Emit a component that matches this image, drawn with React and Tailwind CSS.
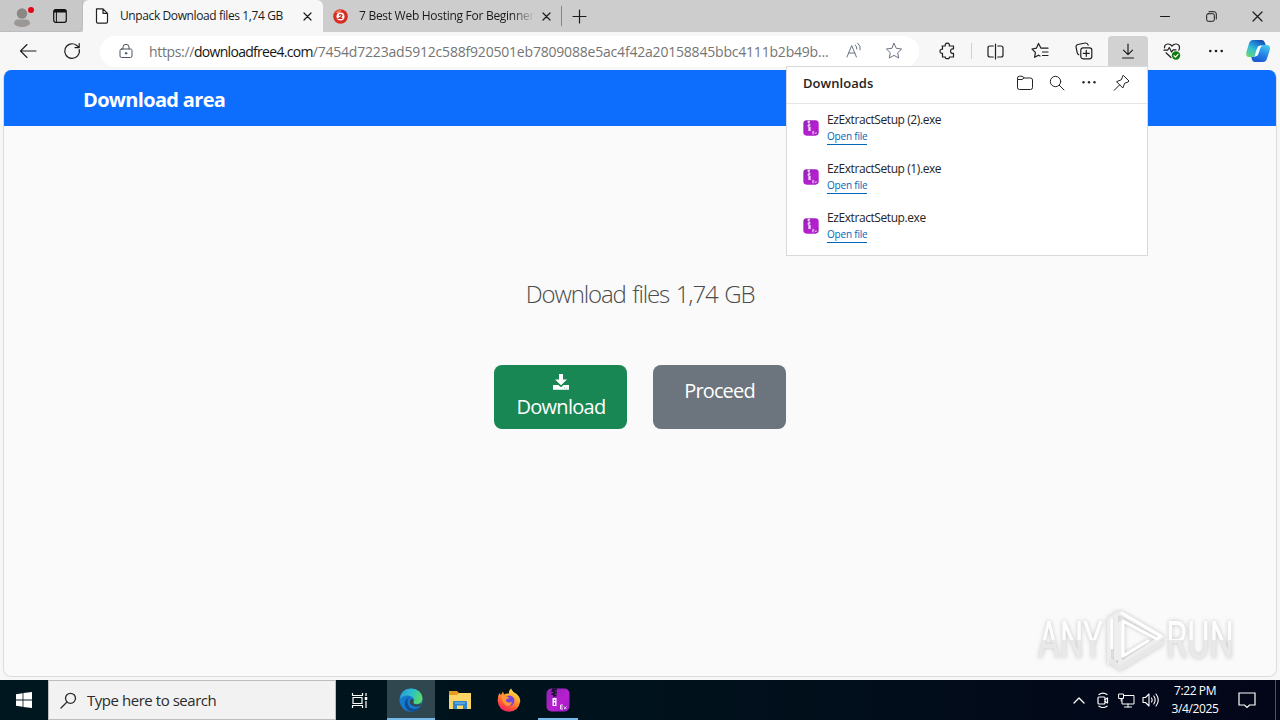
import React from 'react';

const Svg = ({ size = 16, sw = 1, className = '', children, ...rest }) => (
    <svg
        width={size}
        height={size}
        viewBox={`0 0 ${size} ${size}`}
        fill="none"
        stroke="currentColor"
        strokeWidth={sw}
        strokeLinecap="round"
        strokeLinejoin="round"
        className={`shrink-0 ${className}`}
        {...rest}
    >
        {children}
    </svg>
);

const CloseIcon = ({ size = 10 }) => (
    <Svg size={size} sw={1.2}>
        <path d={`M1 1 L${size - 1} ${size - 1} M${size - 1} 1 L1 ${size - 1}`} />
    </Svg>
);

const StarIcon = () => (
    <Svg size={18} className="text-gray-500">
        <path d="M9 1.4 L11.3 6.3 L16.6 7 L12.7 10.7 L13.7 16 L9 13.4 L4.3 16 L5.3 10.7 L1.4 7 L6.7 6.3 Z" />
    </Svg>
);

const ToolButton = ({ children, active }) => (
    <div className="flex w-11 shrink-0 justify-center">
        <div className={`flex h-[30px] w-10 items-center justify-center rounded-t ${active ? 'bg-[#d2d2d2]' : ''}`}>{children}</div>
    </div>
);

const TabStrip = () => (
    <div className="flex h-8 bg-[#cdcdcd] text-[12px] text-[#1b1b1b]">
        <div className="flex w-[83px] items-center rounded-br-md border-b border-r border-[#bdbdbd] bg-[#c8c8c8] pl-3">
            <svg width="24" height="28" viewBox="0 0 24 28" className="shrink-0">
                <circle cx="10" cy="11.5" r="5.2" fill="#8b8785" />
                <path d="M2 22 Q2 17.5 6 17.5 H14 Q18 17.5 18 22 Q15 25 10 25 Q5 25 2 22Z" fill="#9b9795" />
                <circle cx="19" cy="8" r="3" fill="#e30613" />
            </svg>
            <svg width="14" height="14" viewBox="0 0 14 14" className="ml-[17px] shrink-0" fill="none" stroke="#111">
                <rect x="0.7" y="0.7" width="12.6" height="12.6" rx="2" strokeWidth="1.2" />
                <path d="M1 2.2 H13" strokeWidth="2.6" />
                <path d="M3.4 3 V13" strokeWidth="1" />
            </svg>
        </div>
        <div className="flex w-[240px] items-center rounded-t-md bg-[#f7f7f7]">
            <svg width="14" height="16" viewBox="0 0 14 16" className="ml-3 shrink-0" fill="#fff" stroke="#222" strokeWidth="1.2" strokeLinejoin="round">
                <path d="M1.5 0.8 H8 L12.5 5.3 V13.8 Q12.5 15.2 11.2 15.2 H2.8 Q1.5 15.2 1.5 13.8 Z M8 0.8 V5.3 H12.5" />
            </svg>
            <div className="ml-[11px] w-[183px] whitespace-nowrap tracking-[-0.39px]">Unpack Download files 1,74 GB</div>
            <CloseIcon size={9} />
        </div>
        <div className="flex w-[238px] items-center pl-[10px]">
            <svg width="15" height="15" viewBox="0 0 15 15" className="shrink-0">
                <circle cx="7.5" cy="7.5" r="7.3" fill="#d92b1f" />
                <path d="M2 4 Q5 0.5 9 1.2 L6 4Z" fill="#f47a5c" />
                <circle cx="7.5" cy="7.5" r="4" fill="#fff" />
                <path d="M6 6.5 Q7.5 4.8 9 6.4 Q9 7.4 6 9.4 H9.4" fill="none" stroke="#c4281d" strokeWidth="1.3" />
            </svg>
            <div className="ml-[11px] w-[174px] whitespace-nowrap tracking-[-0.28px] [mask-image:linear-gradient(to_right,black_88%,transparent_101%)]">
                7 Best Web Hosting For Beginner
            </div>
            <div className="ml-[9px]"><CloseIcon size={9} /></div>
        </div>
        <div className="my-[6px] w-px bg-[#858585]" />
        <div className="flex flex-1 items-center pl-[10px]">
            <Svg size={15} sw={1.2}><path d="M7.5 1 V14 M1 7.5 H14" /></Svg>
        </div>
        <div className="flex w-[138px] items-center">
            <div className="flex w-[46px] justify-center"><Svg size={10}><path d="M0.5 5.5 H9.5" /></Svg></div>
            <div className="flex w-[46px] justify-center">
                <Svg size={11}>
                    <rect x="0.7" y="2.7" width="7.6" height="7.6" rx="1.5" />
                    <path d="M3 0.7 H8 Q10.3 0.7 10.3 3 V8" />
                </Svg>
            </div>
            <div className="flex w-[46px] justify-center"><CloseIcon size={11} /></div>
        </div>
    </div>
);

const Toolbar = () => (
    <div className="flex h-[38px] items-center bg-[#f7f7f7] pl-[6px] text-[#1f1f1f]">
        <ToolButton>
            <Svg size={18} sw={1.1}><path d="M17 9 H1.5 M8 2.5 L1.5 9 L8 15.5" /></Svg>
        </ToolButton>
        <ToolButton>
            <Svg size={18} sw={1.2}><path d="M16.2 7.5 A7.3 7.3 0 1 1 13.4 3.2 L16 5.4 M16.2 1.5 V5.6 H12" /></Svg>
        </ToolButton>
        <div className="ml-[6px] mr-[6px] flex h-[31px] w-[819px] shrink-0 items-center rounded-full bg-white">
            <Svg size={14} className="ml-[19px] h-4 text-gray-600">
                <rect x="1" y="5" width="12" height="8.5" rx="1.5" />
                <path d="M4 5 V3 A3 2.6 0 0 1 10 3 V5" />
                <circle cx="7" cy="9.3" r="0.8" fill="currentColor" />
            </Svg>
            <div className="ml-4 w-[696px] whitespace-nowrap text-[14px] tracking-[-0.2px] text-[#757575]">
                <span className="tracking-[-0.35px]">https://</span>
                <span className="tracking-[-0.7px] text-[#151515]">downloadfree4.com</span>/7454d7223ad5912c588f920501eb7809088e5ac4f42a20158845bbc4111b2b49b...
            </div>
            <Svg size={18} className="text-gray-500">
                <path d="M2 15 L6.7 3.5 L11.4 15 M3.7 11 H9.8 M10.3 3 Q12 4.5 11.8 7 M12.8 1.2 Q15.8 3.8 15.2 7.8" />
            </Svg>
            <div className="ml-[22px]"><StarIcon /></div>
        </div>
        <ToolButton>
            <Svg size={18} sw={1.2} className="ml-[2px]">
                <path d="M3 4 H6.3 Q5.8 1.2 8.3 1.2 Q10.8 1.2 10.3 4 H14.5 V7 Q11.6 6.6 11.6 9.2 Q11.6 11.8 14.5 11.4 V15 H10.4 Q10.8 16.7 8.4 16.7 Q6 16.7 6.3 15 H3.5 V11.3 Q1 11.5 1 9.2 Q1 7 3.5 7.2 V4" />
            </Svg>
        </ToolButton>
        <div className="mx-[2px] h-4 w-px shrink-0 bg-[#cfcfcf]" />
        <ToolButton>
            <Svg size={17} sw={1.2} className="mr-[1px]">
                <path d="M6.3 3 H3 Q1 3 1 5 V12 Q1 14 3 14 H6.3 M8.5 1 V16 M10.7 3 H14 Q16 3 16 5 V12 Q16 14 14 14 H10.7" />
            </Svg>
        </ToolButton>
        <ToolButton>
            <Svg size={18} sw={1.2}>
                <path d="M10 6.2 H17 M11.5 10 H17 M11.5 13.5 H17 M10 6.2 L7.5 1.5 L5.4 6.2 L1 7 L4.4 10.4 L3.6 15.3 L7.5 13.2 L9 14" />
            </Svg>
        </ToolButton>
        <ToolButton>
            <Svg size={18} sw={1.2}>
                <rect x="5.8" y="5.8" width="11" height="11" rx="2.2" />
                <path d="M11.3 8.3 V14.3 M8.3 11.3 H14.3 M3.8 12.8 Q2.4 12 2.1 10.4 L1.1 5.2 Q0.8 3 2.8 2.5 L10.5 1 Q12.6 0.9 13.2 3.2" />
            </Svg>
        </ToolButton>
        <ToolButton active>
            <Svg size={16} sw={1.2}><path d="M8 1 V11.5 M3.5 7.2 L8 11.7 L12.5 7.2 M2.5 15 H13.5" /></Svg>
        </ToolButton>
        <ToolButton>
            <Svg size={18} sw={1.2}>
                <path d="M1.5 5.8 Q1.5 2.3 4.7 2 Q7.2 1.8 9 4 Q10.8 1.8 13.3 2 Q16.5 2.3 16.5 5.8 Q16.5 7 15.8 8.3 M1 8.2 H4.6 L6.3 5.5 L8.6 10 L10.2 7.8 H13 M3 10.8 L8 15.5" />
                <circle cx="13" cy="13.5" r="4.2" fill="#107c10" stroke="none" />
                <path d="M11 13.7 L12.5 15.1 L15 12.3" stroke="#fff" />
            </Svg>
        </ToolButton>
        <ToolButton>
            <Svg size={16}>
                <g fill="currentColor" stroke="none"><circle cx="2.3" cy="8" r="1.3" /><circle cx="8" cy="8" r="1.3" /><circle cx="13.7" cy="8" r="1.3" /></g>
            </Svg>
        </ToolButton>
        <svg width="26" height="24" viewBox="0 0 26 24" className="ml-[7px] shrink-0">
            <defs>
                <linearGradient id="cpA" x1="0.8" y1="0" x2="0.2" y2="1">
                    <stop offset="0" stopColor="#1846b0" />
                    <stop offset="0.35" stopColor="#1f8fd8" />
                    <stop offset="0.6" stopColor="#35bfd0" />
                    <stop offset="1" stopColor="#62d67c" />
                </linearGradient>
                <linearGradient id="cpB" x1="0.7" y1="0" x2="0.3" y2="1">
                    <stop offset="0" stopColor="#46c4ee" />
                    <stop offset="0.5" stopColor="#2585e8" />
                    <stop offset="1" stopColor="#1b55cf" />
                </linearGradient>
            </defs>
            <path d="M8 1 H17 Q19 1 20 4 L20.6 6 H17 Q14.5 6 13.5 9 L11.5 15 Q10.5 18 7.5 18 H4 Q0.5 18 1.4 13 L4 4.5 Q5 1 8 1Z" fill="url(#cpA)" />
            <path d="M18 23 H10 Q7.5 23 6.8 20 L6.2 18 H8 Q11 18 12 15 L14 9 Q15 6 18 6 H21.5 Q26 6 24.8 11 L22 19.5 Q21 23 18 23Z" fill="url(#cpB)" />
            <path d="M13.2 7 H17.2 Q15.8 7.4 15.2 9.4 L13.2 15.6 Q12.6 17.6 9.6 17.6 L11.2 11.5Z" fill="#f4faff" />
        </svg>
    </div>
);

const ZipIcon = ({ size }) => (
    <svg width={size} height={size} viewBox="0 0 24 24" className="shrink-0">
        <defs>
            <linearGradient id="zip" x1="0" y1="0" x2="1" y2="1">
                <stop offset="0" stopColor="#8d23b5" />
                <stop offset="0.6" stopColor="#b81fd0" />
                <stop offset="1" stopColor="#9a1bc0" />
            </linearGradient>
        </defs>
        <rect x="0.5" y="0.5" width="23" height="23" rx="5" fill="url(#zip)" />
        {size > 20 ? (
            <g>
                <path d="M6 0.5 H11 V2.5 H9 V3.5 H11 V5.5 H9 V6.5 H10.5 V8.5 H7 V7 H5.5 V5 H7.5 V4 H5.5 V2 H6Z" fill="#1d1030" />
                <path d="M6.5 10 H10.5 V18 H6.5Z" fill="#fff" />
                <path d="M8 11.8 H9.3 V13 H8Z M7.8 14.5 H9.2 V17 H7.8Z" fill="#9020b0" />
            </g>
        ) : (
            <path d="M7 1 H10.5 V3.5 H9.5 V5.5 H11 V8.5 H9.5 V10 H11.5 V16.5 H8 V10 H7 V7 H8.2 V4.5 H7Z" fill="#ecd5f5" />
        )}
        <path d="M14.5 17 H17 M14.5 19 H16.7 M14.5 21 H17 M14.5 17 V21 M18 18.5 L20.5 21 M20.5 18.5 L18 21" stroke="#f3dff8" strokeWidth="1" fill="none" />
    </svg>
);

const downloads = ['EzExtractSetup (2).exe', 'EzExtractSetup (1).exe', 'EzExtractSetup.exe'];

const DownloadsPanel = () => (
    <div className="absolute left-[786px] top-[66px] h-[190px] w-[362px] border border-[#d9d9d9] bg-white text-[#242424]">
        <div className="flex h-[37px] items-center border-b border-[#e6e6e6] pb-[3px] pl-4">
            <div className="flex-1 text-[13px] font-semibold tracking-[0.05px]">Downloads</div>
            <div className="mr-[17px] flex items-center gap-[14px] pb-[2px]">
                <Svg size={18}>
                    <path d="M1.5 5.2 V4 Q1.5 2.2 3.3 2.2 H6 L8.5 4 H14.5 Q16.5 4 16.5 6 V13.5 Q16.5 15.5 14.5 15.5 H3.5 Q1.5 15.5 1.5 13.5 V5.5 H6 L8 4" />
                </Svg>
                <Svg size={18}><circle cx="7.5" cy="7.5" r="5.2" /><path d="M11.3 11.3 L16 16" /></Svg>
                <Svg size={18}>
                    <g fill="currentColor" stroke="none"><circle cx="3.5" cy="8.3" r="1.2" /><circle cx="9" cy="8.3" r="1.2" /><circle cx="14.5" cy="8.3" r="1.2" /></g>
                </Svg>
                <Svg size={18}>
                    <path d="M11.5 1.5 L17 7 L16 8 L12.7 9.2 L10.8 14 L4.5 7.7 L9.3 5.8 L10.7 2.3 Z M7.5 11 L2.2 16.3" />
                </Svg>
            </div>
        </div>
        {downloads.map((name) => (
            <div key={name} className="flex h-[49px] items-center pb-px pl-4">
                <ZipIcon size={16} />
                <div className="ml-2 flex flex-col items-start">
                    <div className="text-[12px] leading-[17px] tracking-[-0.42px]">{name}</div>
                    <div className="border-b border-[#0067b8] pt-px text-[10px] leading-[15px] tracking-[-0.2px] text-[#0067b8]">Open file</div>
                </div>
            </div>
        ))}
    </div>
);

const Watermark = () => (
    <svg width="230" height="70" viewBox="0 0 230 70" className="absolute left-[1036px] top-[608px] drop-shadow-[0_0_2px_rgba(0,0,0,0.22)]">
        <defs>
            <linearGradient id="wm" gradientUnits="userSpaceOnUse" x1="0" y1="14" x2="0" y2="51">
                <stop offset="0.48" stopColor="#fdfdfd" />
                <stop offset="0.5" stopColor="#e9e9e9" />
            </linearGradient>
        </defs>
        <g fill="url(#wm)" fontFamily="Roboto, sans-serif" fontSize="51">
            <text x="2" y="50" textLength="65" lengthAdjust="spacingAndGlyphs">ANY</text>
            <text x="130" y="50" textLength="68" lengthAdjust="spacingAndGlyphs">RUN</text>
        </g>
        <g fill="none" strokeLinejoin="round" strokeLinecap="round">
            <path d="M84 5 L126 29 L84 56 V15 M84 5 L80 6 V51 M84 5 L73 11 V55" stroke="#eeeeee" strokeWidth="4" />
            <path d="M86 5 L125 28 L121 31 L87 13 V48 L112 33 M76 12 V40" stroke="#fff" strokeWidth="3" />
            <path d="M75 53 L84 60 L125 35" stroke="#e8e8e8" strokeWidth="5" />
        </g>
    </svg>
);

const PageContent = () => (
    <div className="h-[610px] bg-[#f7f7f7] px-[3px] pb-[3px]">
        <div className="h-[607px] overflow-hidden rounded-lg border border-[#dcdcdc] border-t-0 bg-[#fafafa]">
            <div className="flex h-14 items-center bg-[#0d6efd] pl-[79px] pt-1 text-[20px] font-bold tracking-[-0.67px] text-white">
                Download area
            </div>
            <div className="flex flex-col items-center pt-[150px]">
                <div className="text-[24px] font-light leading-[36px] tracking-[-1.12px] text-[#4c4c4c] [word-spacing:1.5px]">Download files 1,74 GB</div>
                <div className="mt-[53px] flex gap-[26px] text-[20px] leading-[24px] text-white">
                    <div className="flex h-16 w-[133px] flex-col items-center rounded-lg bg-[#198754] pt-[9px]">
                        <svg width="16" height="16" viewBox="0 0 16 16" fill="#fff" className="ml-px">
                            <path d="M6 0 H10 V5.5 H14 L8 11.3 L2 5.5 H6Z" />
                            <path d="M0 11 H5.3 L8 13.3 L10.7 11 H16 V15.7 H0Z" />
                            <path d="M11 14 H12 M13.2 14 H14.2" stroke="#8cc3aa" />
                        </svg>
                        <div className="ml-px mt-[5px] tracking-[-0.7px]">Download</div>
                    </div>
                    <div className="flex h-16 w-[133px] justify-center rounded-lg bg-[#6c757d] pt-[14px] tracking-[-0.85px]">Proceed</div>
                </div>
            </div>
        </div>
    </div>
);

const EdgeLogo = () => (
    <svg width="24" height="24" viewBox="0 0 24 24">
        <defs>
            <linearGradient id="edgeTop" x1="0" y1="0.3" x2="1" y2="0.6">
                <stop offset="0" stopColor="#259bdf" />
                <stop offset="0.5" stopColor="#2ec1c6" />
                <stop offset="1" stopColor="#5ddd5b" />
            </linearGradient>
        </defs>
        <circle cx="12" cy="12" r="11.5" fill="#167bcc" />
        <path d="M0.7 11 Q2 0.5 12 0.5 Q22.5 1 23.5 10 Q23.5 16 17 16 Q13.5 16 14.5 13.5 Q16 10.5 12.5 8.5 Q6 5.5 0.7 11Z" fill="url(#edgeTop)" />
        <path d="M8.3 13 Q8.5 20 15 21 Q19 21.3 22 18.3 Q18 24 12 23.5 Q5.5 21.5 5.8 15 Q6.3 10.3 11 9 Q8.2 10.5 8.3 13Z" fill="#104d96" />
        <path d="M14.5 13.5 Q13.5 16 17 16.5 Q20 16.7 22.5 15 L21.8 17.8 Q16 20 12 17 Q10 15 11 12.5 Q12 10.5 14.5 11.2Z" fill="#35474f" />
    </svg>
);

const FolderLogo = () => (
    <svg width="22" height="20" viewBox="0 0 22 20">
        <path d="M0 1 H8 L10 3 H22 V6 H0Z" fill="#e59d1d" />
        <path d="M0 5 H8 L10 3 H22 V19 H0Z" fill="#fbd566" />
        <path d="M4 19 V12 Q4 11 5 11 H17 Q18 11 18 12 V19 H14 V15.5 H8 V19Z" fill="#2f87cf" />
        <path d="M6 13 H16" stroke="#7cc3ef" />
    </svg>
);

const FirefoxLogo = () => (
    <svg width="24" height="24" viewBox="0 0 24 24">
        <defs>
            <linearGradient id="fox" x1="0.8" y1="0" x2="0.3" y2="1">
                <stop offset="0" stopColor="#fff04f" />
                <stop offset="0.4" stopColor="#ffa22e" />
                <stop offset="0.75" stopColor="#ff5038" />
                <stop offset="1" stopColor="#f0206a" />
            </linearGradient>
        </defs>
        <path d="M2.5 5 L4 7 L6 3.5 L7 6.5 Q9 5 12 5.5 Q11.5 3 14 0.5 Q15.5 4 19 5.5 Q23.5 9 23.2 13.5 Q21.5 23.5 12 23.7 Q1.5 23 0.7 13 Q0.5 8 2.5 5Z" fill="url(#fox)" />
        <circle cx="12.3" cy="12.6" r="5.2" fill="#7446dd" />
        <path d="M4.5 8 Q8 6.8 12 9.5 Q12 11 9.5 11 Q8 12.5 10 14 Q13 15.3 15 13.5 Q14 18.5 10 17.8 Q5.5 16.5 4.5 8Z" fill="#ff9637" />
    </svg>
);

const Taskbar = () => (
    <div className="flex h-10 bg-gradient-to-r from-[#00171f] via-[#00121c] to-[#030619] text-white">
        <div className="flex w-12 items-center justify-center">
            <svg width="16" height="16" viewBox="0 0 16 16" fill="#fff">
                <path d="M0 2.2 L6.6 1.3 V7.5 H0Z M7.4 1.1 L16 0 V7.5 H7.4Z M0 8.4 H6.6 V14.7 L0 13.8Z M7.4 8.4 H16 V16 L7.4 14.9Z" />
            </svg>
        </div>
        <div className="flex w-[288px] items-center border border-[#bdbdbd] bg-[#f2f2f2] pl-[11px] text-[#2b2b2b]">
            <Svg size={17} sw={1.3}><circle cx="10.5" cy="6.3" r="5" /><path d="M7 10 L1 16" /></Svg>
            <div className="ml-[10px] text-[15px] tracking-[-0.46px]">Type here to search</div>
        </div>
        <div className="flex w-[51px] items-center justify-center pr-[4px]">
            <Svg size={17} sw={1.2} strokeLinecap="butt">
                <path d="M1.5 1 V3.5 H11.5 V1 M1.5 16 V13.5 H11.5 V16 M2 5.5 H11 V11.5 H2Z M15 1 V4 M15 9 V16" />
                <path d="M15 5 V8" strokeWidth="2.5" />
            </Svg>
        </div>
        <div className="flex w-12 items-center justify-center border-b-2 border-[#76b9ed] bg-[#314750] pt-px"><EdgeLogo /></div>
        <div className="flex w-[49px] items-center justify-center"><FolderLogo /></div>
        <div className="flex w-[49px] items-center justify-center"><FirefoxLogo /></div>
        <div className="ml-[5px] flex w-10 items-center justify-center border-b-2 border-[#76b9ed] pt-[2px]"><ZipIcon size={24} /></div>
        <div className="flex flex-1 items-center justify-end">
            <Svg size={12} sw={1.3}><path d="M1 9 L6 4 L11 9" /></Svg>
            <Svg size={16} sw={1.2} className="ml-[10px]">
                <rect x="3" y="5" width="7" height="7" rx="1" />
                <path d="M10 7.5 L12.5 6 V11 L10 9.5 M4 2.5 Q8 -0.3 12 2.5 M4 14.2 Q8 16.8 12 14.2" />
            </Svg>
            <Svg size={17} className="ml-[7px]" strokeLinejoin="miter">
                <path d="M6 3.5 H16 V12 H4 V7 M10 12 V15 M6.5 15 H13.5 M1 2 H5.5 V6.5 H1Z M3.2 6.5 V9" />
            </Svg>
            <Svg size={18} sw={1.1} className="ml-[7px]">
                <path d="M1 6.5 H3.5 L7 3 V15 L3.5 11.5 H1Z M9.5 7 Q10.8 9 9.5 11 M11.8 5 Q14.5 9 11.8 13 M14 3 Q18.5 9 14 15" />
            </Svg>
        </div>
        <div className="flex w-[68px] flex-col items-center justify-center pl-[2px] text-[12px] leading-[18px] tracking-[-0.4px]">
            <div>7:22 PM</div>
            <div>3/4/2025</div>
        </div>
        <div className="flex w-[47px] items-center pl-[10px]">
            <Svg size={18} sw={1.2} strokeLinejoin="miter">
                <path d="M1 2 H17 V14 H11.5 L9 16.5 L6.5 14 H1Z" />
            </Svg>
        </div>
        <div className="w-[5px] border-l border-[#4b5360]" />
    </div>
);

const App = () => (
    <div className="relative h-[720px] w-[1280px] overflow-hidden bg-[#f7f7f7] font-['Open_Sans','Noto_Sans',sans-serif]">
        <TabStrip />
        <Toolbar />
        <PageContent />
        <Taskbar />
        <DownloadsPanel />
        <Watermark />
    </div>
);

export default App;
